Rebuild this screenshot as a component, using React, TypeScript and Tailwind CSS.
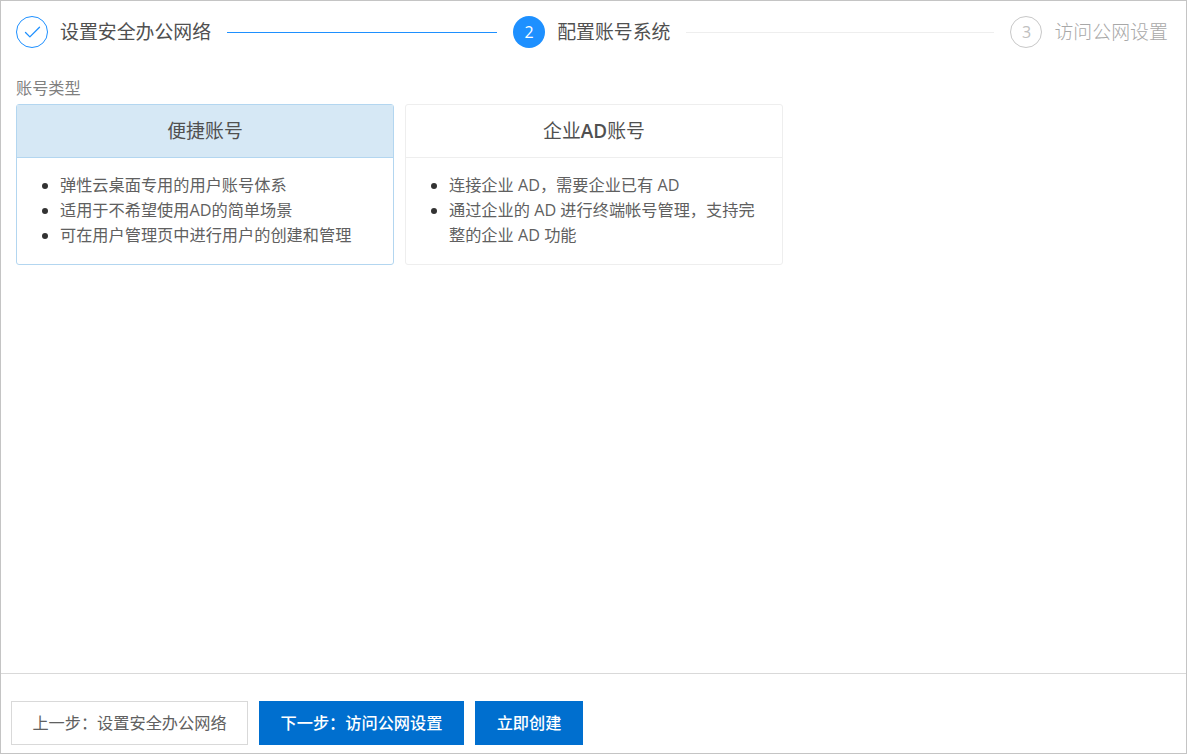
import { Check } from 'lucide-react';

const FONT = "font-['Open_Sans','Noto_Sans_CJK_SC',sans-serif]";

function StepLabel({ text, muted }: { text: string; muted?: boolean }) {
  return <span className={`ml-3 text-[18.9px] leading-8 whitespace-nowrap ${muted ? 'text-[#a8a8a8] font-light' : 'text-[#505050]'}`}>{text}</span>;
}

function AccountCard({ title, items, active }: { title: React.ReactNode; items: string[]; active?: boolean }) {
  return (
    <div className={`w-[378px] h-[161px] rounded-[3px] border ${active ? 'border-[#b3d6f0]' : 'border-[#eeeeee]'}`}>
      <div className={`h-[53px] flex items-center justify-center text-[18.9px] text-[#505050] border-b ${active ? 'bg-[#d6e8f5] border-[#b3d6f0]' : 'border-[#eeeeee]'}`}>
        {title}
      </div>
      <ul className="list-disc pl-[43px] pr-5 pt-[15px] text-[16.2px] leading-[25px] text-[#606060] marker:text-[#333]">
        {items.map(t => <li key={t}>{t}</li>)}
      </ul>
    </div>
  );
}

export default function App() {
  return (
    <div className={`${FONT} w-[1187px] h-[754px] flex flex-col bg-white border border-[#c4c4c4]`}>
      <div className="flex-1 px-[15px] pt-[15px]">
        {/* 步骤条 */}
        <div className="flex items-center h-8">
          <span className="w-8 h-8 shrink-0 rounded-full border border-[#1e90ff] flex items-center justify-center">
            <Check size={21} strokeWidth={1.5} className="text-[#1e90ff]" />
          </span>
          <StepLabel text="设置安全办公网络" />
          <div className="ml-4 w-[270px] h-px bg-[#1e90ff]" />
          <span className="ml-4 w-8 h-8 shrink-0 rounded-full bg-[#1e90ff] flex items-center justify-center text-white text-base">2</span>
          <StepLabel text="配置账号系统" />
          <div className="ml-4 w-[308px] h-px bg-[#eeeeee]" />
          <span className="ml-4 w-8 h-8 shrink-0 rounded-full border border-[#c8c8c8] flex items-center justify-center text-[#c0c0c0] text-base">3</span>
          <StepLabel text="访问公网设置" muted />
        </div>

        <div className="mt-[28px] mb-1 h-6 text-[16.2px] leading-6 text-[#808080]">账号类型</div>

        <div className="flex gap-[11px]">
          <AccountCard
            active
            title="便捷账号"
            items={['弹性云桌面专用的用户账号体系', '适用于不希望使用AD的简单场景', '可在用户管理页中进行用户的创建和管理']}
          />
          <AccountCard
            title={<>企业<span className="font-semibold">AD</span>账号</>}
            items={['连接企业 AD，需要企业已有 AD', '通过企业的 AD 进行终端帐号管理，支持完整的企业 AD 功能']}
          />
        </div>
      </div>

      {/* 底部操作 */}
      <div className="h-[80px] border-t border-[#d9d9d9] pl-[10px] pt-[27px] flex items-start gap-[11px] text-[16.2px]">
        <button className="w-[237px] h-[44px] bg-white border border-[#d9d9d9] text-[#606060]">上一步：设置安全办公网络</button>
        <button className="w-[205px] h-[44px] bg-[#006fcf] text-white font-medium">下一步：访问公网设置</button>
        <button className="w-[108px] h-[44px] bg-[#006fcf] text-white font-medium">立即创建</button>
      </div>
    </div>
  );
}
